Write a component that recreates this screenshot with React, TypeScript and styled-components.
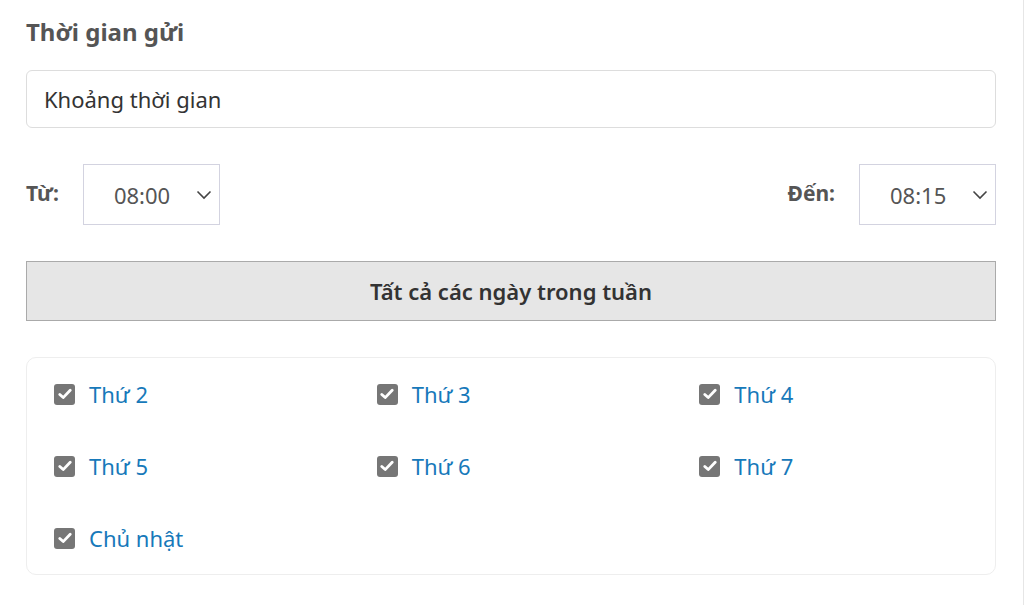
import { FC } from "react";
import styled, { createGlobalStyle } from "styled-components";

const GlobalStyle = createGlobalStyle`
  html, body {
    margin: 0;
    padding: 0;
    background: #ffffff;
  }
  body {
    font-family: "Noto Sans", Roboto, sans-serif;
  }
`;

const days = ["Thứ 2", "Thứ 3", "Thứ 4", "Thứ 5", "Thứ 6", "Thứ 7", "Chủ nhật"];

const Chevron = () => (
  <svg width="16" height="10" viewBox="0 0 16 10" fill="none">
    <path d="M1.5 1.5L8 8L14.5 1.5" stroke="#444" strokeWidth="1.6" />
  </svg>
);

const Check = () => (
  <svg width="14" height="12" viewBox="0 0 14 12" fill="none">
    <path
      d="M1.8 6.4L5.2 9.6L12.2 2.2"
      stroke="#fff"
      strokeWidth="2.8"
      strokeLinecap="round"
      strokeLinejoin="round"
    />
  </svg>
);

const App: FC = () => {
  return (
    <>
      <GlobalStyle />
      <Page>
        <Title>Thời gian gửi</Title>
        <TextInput>Khoảng thời gian</TextInput>

        <TimeRow>
          <TimeGroup>
            <Label>Từ:</Label>
            <Select>
              <span>08:00</span>
              <Chevron />
            </Select>
          </TimeGroup>
          <TimeGroup>
            <Label>Đến:</Label>
            <Select>
              <span>08:15</span>
              <Chevron />
            </Select>
          </TimeGroup>
        </TimeRow>

        <AllDaysButton>Tất cả các ngày trong tuần</AllDaysButton>

        <DaysCard>
          {days.map((day) => (
            <DayItem key={day}>
              <Box>
                <Check />
              </Box>
              <DayLabel>{day}</DayLabel>
            </DayItem>
          ))}
        </DaysCard>
      </Page>
    </>
  );
};

const Page = styled.div`
  box-sizing: border-box;
  width: 1024px;
  min-height: 605px;
  padding: 16px 27px 20px 26px;
  border-right: 1px solid #e6e6e6;
`;

const Title = styled.h2`
  margin: 0;
  font-size: 24px;
  line-height: 32px;
  font-weight: 700;
  color: #555555;
`;

const TextInput = styled.div`
  box-sizing: border-box;
  margin-top: 22px;
  height: 58px;
  padding: 0 17px;
  display: flex;
  align-items: center;
  border: 1px solid #dddddd;
  border-radius: 6px;
  font-size: 22px;
  color: #333333;
`;

const TimeRow = styled.div`
  margin-top: 36px;
  display: flex;
  justify-content: space-between;
  align-items: center;
`;

const TimeGroup = styled.div`
  display: flex;
  align-items: center;
  gap: 24px;
`;

const Label = styled.span`
  font-size: 21px;
  font-weight: 700;
  color: #555555;
  margin-top: -3px;
`;

const Select = styled.div`
  box-sizing: border-box;
  width: 137px;
  height: 61px;
  padding: 0 7px 0 30px;
  display: flex;
  align-items: center;
  justify-content: space-between;
  border: 1px solid #d3d3e0;
  font-size: 22px;
  color: #555555;
`;

const AllDaysButton = styled.button`
  box-sizing: border-box;
  display: block;
  width: 100%;
  height: 60px;
  margin-top: 36px;
  border: 1px solid #aaaaaa;
  background: #e6e6e6;
  font-family: inherit;
  font-size: 22px;
  font-weight: 600;
  color: #333333;
  cursor: pointer;
`;

const DaysCard = styled.div`
  margin-top: 36px;
  display: grid;
  grid-template-columns: repeat(3, 1fr);
  border: 1px solid #eeeeee;
  border-radius: 10px;
`;

const DayItem = styled.label`
  height: 72px;
  padding-left: 27px;
  display: flex;
  align-items: center;
  gap: 14px;
  cursor: pointer;
`;

const Box = styled.span`
  width: 21px;
  height: 21px;
  border-radius: 3px;
  background: #767676;
  display: flex;
  align-items: center;
  justify-content: center;
`;

const DayLabel = styled.span`
  font-size: 22px;
  color: #1779ba;
`;

export default App;
